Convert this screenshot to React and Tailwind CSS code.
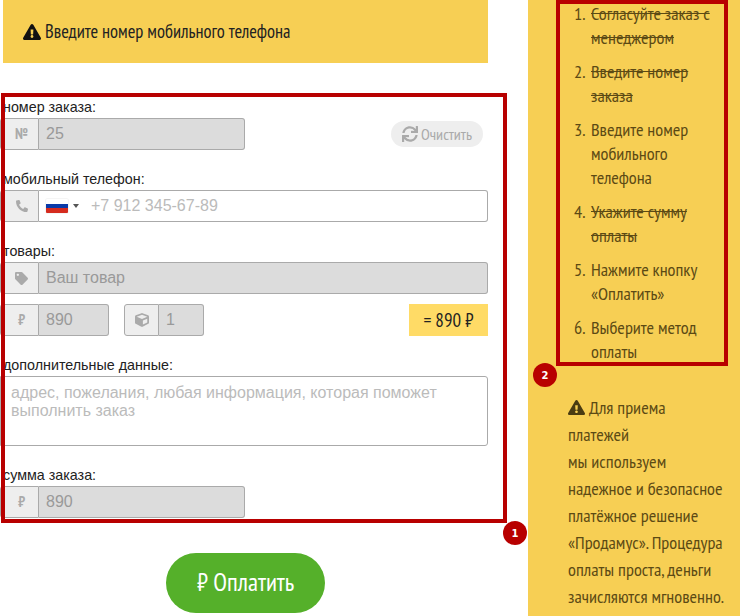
import { FaExclamationTriangle, FaPhone, FaTag, FaCube, FaSync } from 'react-icons/fa';

const narrow = "font-['Liberation_Sans_Narrow','PT_Sans_Narrow','Roboto',sans-serif]";

const steps = [
  { text: 'Согласуйте заказ с менеджером', done: true },
  { text: 'Введите номер заказа', done: true },
  { text: 'Введите номер мобильного телефона', done: false },
  { text: 'Укажите сумму оплаты', done: true },
  { text: 'Нажмите кнопку «Оплатить»', done: false },
  { text: 'Выберите метод оплаты', done: false },
];

function Label({ children }) {
  return <div className="h-[21px] pl-[3px] text-[14.3px] leading-[20px] text-[#222]">{children}</div>;
}

function Addon({ children, className = '' }) {
  return (
    <div className={`flex h-full shrink-0 items-center justify-center border border-[#aaa] bg-[#eee] text-[#aaa] text-[13px] ${className}`}>
      {children}
    </div>
  );
}

function Group({ icon, value, placeholder, width, addon = 'w-[39px] pl-[4px] rounded-l-[3px]', inputPad = 'pl-[7px]' }) {
  return (
    <div className={`flex h-[32px] ${width}`}>
      <Addon className={addon}>{icon}</Addon>
      <input
        readOnly
        value={value}
        placeholder={placeholder}
        className={`h-full min-w-0 flex-1 rounded-r-[3px] border border-l-0 border-[#aaa] bg-[#dcdcdc] ${inputPad} text-[16px] text-[#999] outline-none placeholder:text-[#999]`}
      />
    </div>
  );
}

function Badge({ n, className }) {
  return (
    <div className={`absolute flex h-[24px] w-[24px] items-center justify-center rounded-full bg-[#b80000] font-['DejaVu_Sans',sans-serif] text-[10px] font-bold text-white ${className}`}>
      {n}
    </div>
  );
}

const Rub = <span className={`font-bold text-[15px] ${narrow}`}>₽</span>;

export default function App() {
  return (
    <div className="relative flex h-[616px] w-[740px] overflow-hidden bg-white font-['Liberation_Sans',Arial,sans-serif]">
      <div className="w-[528px] shrink-0">
        <div className={`ml-[3px] flex h-[63px] w-[485px] items-center gap-[4px] bg-[#f7cf54] pl-[20px] text-[18.5px] text-[#222] ${narrow}`}>
          <FaExclamationTriangle className="text-[18px] text-[#111]" />
          <span>Введите номер мобильного телефона</span>
        </div>

        <div className="mt-[34px] w-[488px]">
          <Label>номер заказа:</Label>
          <div className="flex items-center justify-between">
            <Group width="w-[245px]" value="25" icon={<span className={`font-bold text-[15px] ${narrow}`}>№</span>} />
            <button className="mr-[5px] flex h-[26px] w-[92px] items-center justify-center gap-[3px] rounded-full bg-[#eeeeee] text-[14px] text-[#aaa]">
              <FaSync className="text-[16px]" />
              <span className={`text-[16px] ${narrow}`}>Очистить</span>
            </button>
          </div>

          <div className="mt-[19px]">
            <Label>мобильный телефон:</Label>
            <div className="flex h-[32px]">
              <Addon className="w-[39px] rounded-l-[3px] pl-[4px]"><FaPhone className="rotate-90 text-[12px]" /></Addon>
              <div className="flex flex-1 items-center rounded-r-[3px] border border-l-0 border-[#aaa] bg-white pl-[7px]">
                <div className="flex h-[14px] w-[22px] flex-col overflow-hidden rounded-[1px] shadow-[0_0_1px_#999]">
                  <div className="flex-1 bg-white" />
                  <div className="flex-1 bg-[#0a3aa8]" />
                  <div className="flex-1 bg-[#d52b1e]" />
                </div>
                <div className="ml-[5px] h-0 w-0 border-x-[3px] border-t-[4px] border-x-transparent border-t-[#555]" />
                <span className="ml-[12px] text-[16px] text-[#bbb]">+7 912 345-67-89</span>
              </div>
            </div>
          </div>

          <div className="mt-[19px]">
            <Label>товары:</Label>
            <Group width="w-full" value="" placeholder="Ваш товар" icon={<FaTag className="text-[13px]" />} />
          </div>

          <div className="mt-[10px] flex items-center">
            <Group width="w-[109px]" value="890" icon={Rub} />
            <Group
              width="ml-[15px] w-[80px]"
              value="1"
              addon="w-[35px] rounded-l-[3px]"
              icon={<FaCube className="text-[14px]" />}
            />
            <div className={`ml-auto flex h-[32px] w-[79px] items-center justify-center bg-[#ffdb66] text-[19px] text-[#222] ${narrow}`}>
              = 890 ₽
            </div>
          </div>

          <div className="mt-[19px]">
            <Label>дополнительные данные:</Label>
            <textarea
              readOnly
              placeholder="адрес, пожелания, любая информация, которая поможет выполнить заказ"
              className="block h-[70px] w-full resize-none rounded-r-[3px] border border-[#aaa] bg-white pl-[10px] pr-[40px] pt-[7px] text-[16px] leading-[18px] outline-none placeholder:text-[#bbb]"
            />
          </div>

          <div className="mt-[19px]">
            <Label>сумма заказа:</Label>
            <Group width="w-[245px]" value="890" icon={Rub} />
          </div>
        </div>

        <button className={`ml-[166px] mt-[35px] flex h-[60px] w-[159px] items-center justify-center rounded-full bg-[#55b02a] text-[25px] text-white ${narrow}`}>
          ₽ Оплатить
        </button>
      </div>

      <div className={`flex-1 bg-[#f7cf54] text-[18.3px] text-[#5c4a14] ${narrow}`}>
        <ol className="mt-[1px] pl-[46px] pr-[14px] leading-[24px]">
          {steps.map((s, i) => (
            <li key={s.text} className="mb-[10px] flex">
              <span className="w-[17px] shrink-0">{i + 1}.</span>
              <span className={s.done ? 'line-through' : ''}>{s.text}</span>
            </li>
          ))}
        </ol>
        <p className="mt-[31px] pl-[40px] pr-[13px] leading-[27px]">
          <FaExclamationTriangle className="mr-[4px] inline align-[-2px] text-[17px] text-[#4a3c12]" />
          Для приема платежей
          <br />
          мы используем надежное и безопасное платёжное решение «Продамус». Процедура оплаты проста, деньги зачисляются мгновенно.
        </p>
      </div>

      <div className="absolute left-[1px] top-[93px] h-[430px] w-[506px] border-[4px] border-[#b80000]" />
      <div className="absolute left-[556px] top-0 h-[366px] w-[172px] border-[4px] border-[#b80000]" />
      <Badge n="1" className="left-[503px] top-[521px]" />
      <Badge n="2" className="left-[533px] top-[363px]" />
    </div>
  );
}
